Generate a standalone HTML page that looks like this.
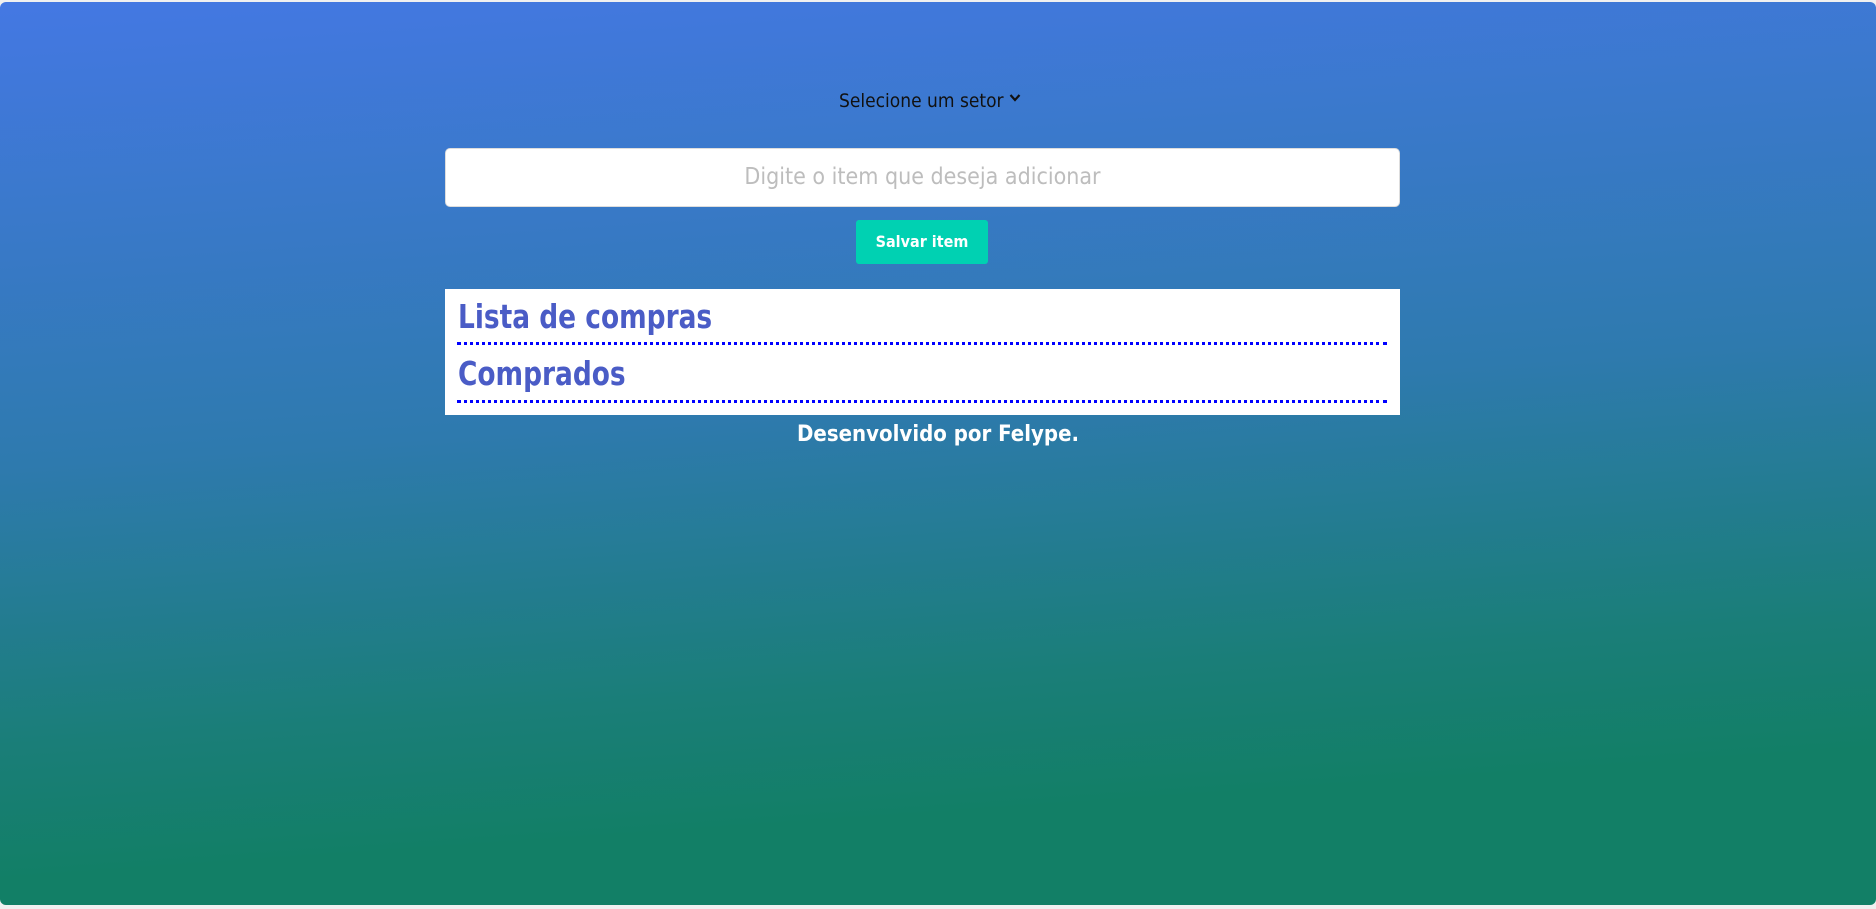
<!DOCTYPE html>
<html><head><meta charset="utf-8"><style>
html,body{margin:0;padding:0;width:1876px;height:909px;background:#f0f0f0;overflow:hidden}
.bg{position:absolute;left:0;top:2px;width:1876px;height:903px;border-radius:6px;
background:linear-gradient(176deg,#4478e3 0%,#2e7aae 45%,#1a7e78 72%,#127f66 85%,#127f66 100%);}
.sel{position:absolute;left:-8px;width:1876px;top:90px;text-align:center;font:19px "DejaVu Sans Condensed","Liberation Sans",sans-serif;color:#111}
.inp{position:absolute;left:445px;top:148px;width:955px;height:59px;background:#fff;border-radius:5px;box-sizing:border-box;border:1px solid #ddd;
text-align:center;font:23px "DejaVu Sans Condensed","Liberation Sans",sans-serif;line-height:57px;color:#bdbdbd}
.btn{position:absolute;left:856px;top:220px;width:132px;height:44px;background:#00d1b2;border-radius:3px;color:#fff;
font:bold 16px "DejaVu Sans Condensed","Liberation Sans",sans-serif;line-height:44px;text-align:center}
.box{position:absolute;left:445px;top:289px;width:955px;height:126px;background:#fff}
.h{position:absolute;left:13px;color:#4a5cc6;font:bold 33px "DejaVu Sans Condensed","Liberation Sans",sans-serif;white-space:nowrap;transform:scaleX(0.89);transform-origin:left top}
.d{position:absolute;left:12px;width:930px;border-top:3px dotted #0000ff}
.ft{position:absolute;left:0;width:1876px;top:422px;text-align:center;color:#fff;font:bold 22px "DejaVu Sans Condensed","Liberation Sans",sans-serif}
</style></head><body>
<div class="bg"></div>
<div class="sel">Selecione um setor <svg width="12" height="10" viewBox="0 0 12 10" style="vertical-align:4px"><path d="M1.5 2 L6 7 L10.5 2" stroke="#111" stroke-width="2.2" fill="none"/></svg></div>
<div class="inp">Digite o item que deseja adicionar</div>
<div class="btn">Salvar item</div>
<div class="box">
<div class="h" style="top:8px">Lista de compras</div>
<div class="d" style="top:53px"></div>
<div class="h" style="top:65px">Comprados</div>
<div class="d" style="top:111px"></div>
</div>
<div class="ft">Desenvolvido por Felype.</div>
</body></html>
